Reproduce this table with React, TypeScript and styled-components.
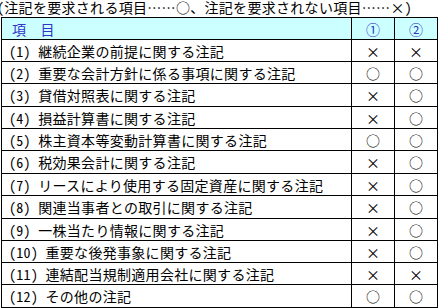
import React from "react";
import styled, { createGlobalStyle } from "styled-components";

const GlobalStyle = createGlobalStyle`
  html, body {
    margin: 0;
    padding: 0;
    background: #ffffff;
  }
  body {
    font-family: "Noto Sans CJK JP", "Noto Sans", sans-serif;
    color: #000000;
  }
`;

const Page = styled.div`
  width: 438px;
  height: 308px;
  overflow: hidden;
  display: flex;
  flex-direction: column;
`;

const Title = styled.div`
  height: 17px;
  font-size: 14px;
  line-height: 15px;
  letter-spacing: 0.3px;
  white-space: nowrap;
  margin-left: -3px;
`;

const Half = styled.span`
  font-feature-settings: "hwid" 1;
`;

const Grid = styled.div`
  margin-left: 1px;
  width: 436px;
  display: grid;
  grid-template-columns: 350px 43px 43px;
  border-left: 1px solid #000;
  border-top: 1px solid #000;
`;

const Cell = styled.div<{ $h: number; $head?: boolean; $center?: boolean }>`
  height: ${(p) => p.$h - 1}px;
  border-right: 1px solid #000;
  border-bottom: 1px solid #000;
  background: ${(p) => (p.$head ? "#ccffff" : "#ffffff")};
  color: ${(p) => (p.$head ? "#3333cc" : "#000000")};
  display: flex;
  align-items: center;
  justify-content: ${(p) => (p.$center ? "center" : "flex-start")};
  padding-left: ${(p) => (p.$center ? 0 : 7)}px;
  font-size: 14px;
  line-height: 14px;
  white-space: pre;
`;

const Label = styled.span<{ $indent?: number }>`
  letter-spacing: 0.3px;
  padding-left: ${(p) => p.$indent ?? 0}px;
`;

const rows: { n: string; t: string; a: string; b: string; h: number }[] = [
  { n: "(1)", t: "継続企業の前提に関する注記", a: "×", b: "×", h: 22 },
  { n: "(2)", t: "重要な会計方針に係る事項に関する注記", a: "○", b: "○", h: 22 },
  { n: "(3)", t: "貸借対照表に関する注記", a: "×", b: "○", h: 23 },
  { n: "(4)", t: "損益計算書に関する注記", a: "×", b: "○", h: 22 },
  { n: "(5)", t: "株主資本等変動計算書に関する注記", a: "○", b: "○", h: 22 },
  { n: "(6)", t: "税効果会計に関する注記", a: "×", b: "○", h: 23 },
  { n: "(7)", t: "リースにより使用する固定資産に関する注記", a: "×", b: "○", h: 22 },
  { n: "(8)", t: "関連当事者との取引に関する注記", a: "×", b: "○", h: 23 },
  { n: "(9)", t: "一株当たり情報に関する注記", a: "×", b: "○", h: 22 },
  { n: "(10)", t: "重要な後発事象に関する注記", a: "×", b: "○", h: 22 },
  { n: "(11)", t: "連結配当規制適用会社に関する注記", a: "×", b: "×", h: 22 },
  { n: "(12)", t: "その他の注記", a: "○", b: "○", h: 23 },
];

export default function App() {
  return (
    <>
      <GlobalStyle />
      <Page>
        <Title>
          <Half>(</Half>注記を要求される項目……○、注記を要求されない項目……×<Half>)</Half>
        </Title>
        <Grid>
          <Cell $h={22} $head>
            <Label $indent={3}>項　目</Label>
          </Cell>
          <Cell $h={22} $head $center>
            ①
          </Cell>
          <Cell $h={22} $head $center>
            ②
          </Cell>
          {rows.map((r) => (
            <React.Fragment key={r.n}>
              <Cell $h={r.h}>
                <Label>
                  <Half>{r.n} </Half>
                  {r.t}
                </Label>
              </Cell>
              <Cell $h={r.h} $center>
                {r.a}
              </Cell>
              <Cell $h={r.h} $center>
                {r.b}
              </Cell>
            </React.Fragment>
          ))}
        </Grid>
      </Page>
    </>
  );
}
